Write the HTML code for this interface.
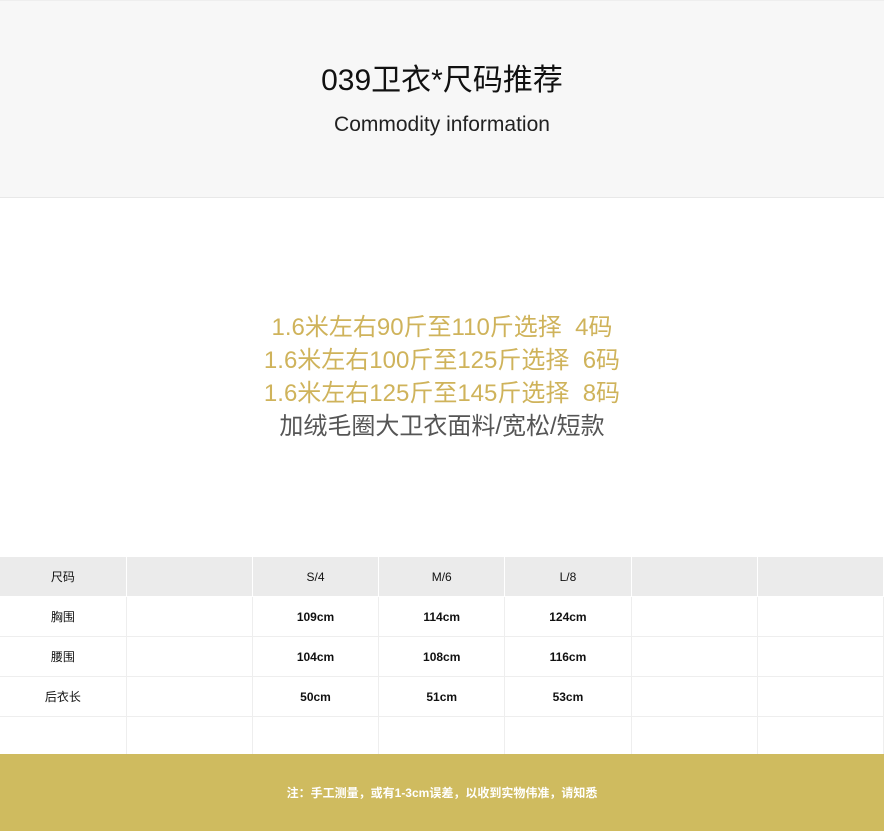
<!DOCTYPE html>
<html><head><meta charset="utf-8"><style>
body{margin:0;width:884px;height:831px;background:#fff;font-family:"Liberation Sans","Noto Sans CJK SC",sans-serif;overflow:hidden;position:relative}
.top{position:absolute;left:0;top:0;width:884px;height:198px;background:#f7f7f7;border-top:1px solid #eee;border-bottom:1px solid #e8e8e8;box-sizing:border-box}
.t1{position:absolute;top:54px;width:100%;text-align:center;font-size:30px;color:#111}
.t2{position:absolute;top:112px;width:100%;text-align:center;font-size:21px;color:#222}
.mid{position:absolute;top:311px;width:100%;text-align:center;font-size:24px;line-height:33px;color:#cfb35b}
.mid .g{color:#555}
table{position:absolute;top:557px;left:0;width:884px;border-collapse:collapse;table-layout:fixed;font-size:12px;color:#111}
td{border:1px solid #eee;text-align:center;height:39px;padding:0}
tr.h td{background:#ebebeb;border-color:#fff;border-top:none}
td.b{font-weight:bold}
.foot{position:absolute;top:754px;left:0;width:884px;height:77px;background:#cfbb5f;color:#fff;font-size:12px;font-weight:bold;text-align:center;line-height:79px}
</style></head><body>
<div class="top"><div class="t1">039卫衣*尺码推荐</div><div class="t2">Commodity information</div></div>
<div class="mid">1.6米左右90斤至110斤选择&nbsp; 4码<br>1.6米左右100斤至125斤选择&nbsp; 6码<br>1.6米左右125斤至145斤选择&nbsp; 8码<br><span class="g">加绒毛圈大卫衣面料/宽松/短款</span></div>
<table>
<tr class="h"><td style="border-left:none">尺码</td><td></td><td>S/4</td><td>M/6</td><td>L/8</td><td></td><td></td></tr>
<tr><td style="border-left:none">胸围</td><td></td><td class="b">109cm</td><td class="b">114cm</td><td class="b">124cm</td><td></td><td></td></tr>
<tr><td style="border-left:none">腰围</td><td></td><td class="b">104cm</td><td class="b">108cm</td><td class="b">116cm</td><td></td><td></td></tr>
<tr><td style="border-left:none">后衣长</td><td></td><td class="b">50cm</td><td class="b">51cm</td><td class="b">53cm</td><td></td><td></td></tr>
<tr><td style="border-left:none"></td><td></td><td></td><td></td><td></td><td></td><td></td></tr>
</table>
<div class="foot">注：手工测量，或有1-3cm误差，以收到实物伟准，请知悉</div>
</body></html>
